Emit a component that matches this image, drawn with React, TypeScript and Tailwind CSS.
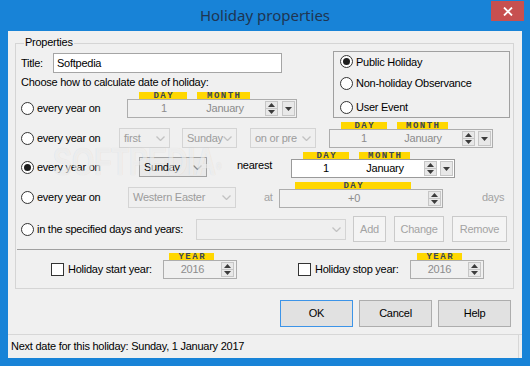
import React from "react";

const ui = "font-['Liberation_Sans',Arial,sans-serif] text-[11px] tracking-[-0.25px]";

function Radio({ checked }: { checked?: boolean }) {
  return (
    <span className="flex h-[13px] w-[13px] shrink-0 items-center justify-center rounded-full border border-[#333] bg-white">
      {checked && <span className="h-[7px] w-[7px] rounded-full bg-[#1e1e1e]" />}
    </span>
  );
}

function Check() {
  return <span className="h-[13px] w-[13px] shrink-0 border border-[#333] bg-white" />;
}

function Tag({ label, className }: { label: string; className: string }) {
  return (
    <div
      className={`h-[7px] overflow-visible bg-[#ffd700] pl-[1.5px] text-center font-['Liberation_Mono',monospace] text-[9px] font-bold leading-[8px] tracking-[1.5px] text-[#3a4657] ${className}`}
    >
      {label}
    </div>
  );
}

function Up() {
  return (
    <svg width="7" height="4" viewBox="0 0 7 4">
      <path d="M3.5 0L7 4H0Z" fill="#3c3c3c" />
    </svg>
  );
}

function Down() {
  return (
    <svg width="7" height="4" viewBox="0 0 7 4">
      <path d="M0 0H7L3.5 4Z" fill="#3c3c3c" />
    </svg>
  );
}

function Spin() {
  return (
    <div className="flex h-[15px] w-[13px] shrink-0 flex-col border border-[#c6c6c6] bg-[#e8e8e8]">
      <div className="flex flex-1 items-center justify-center border-b border-[#c6c6c6]">
        <Up />
      </div>
      <div className="flex flex-1 items-center justify-center">
        <Down />
      </div>
    </div>
  );
}

function Drop() {
  return (
    <div className="flex h-[15px] w-[13px] shrink-0 items-center justify-center border border-[#c6c6c6] bg-[#e8e8e8]">
      <Down />
    </div>
  );
}

function Chevron({ color }: { color: string }) {
  return (
    <svg width="9" height="5" viewBox="0 0 9 5" className="mr-[4px] shrink-0">
      <path d="M0.5 0.5L4.5 4.5L8.5 0.5" fill="none" stroke={color} strokeWidth="1.3" />
    </svg>
  );
}

function Combo({ text, className, enabled }: { text?: string; className: string; enabled?: boolean }) {
  return (
    <div
      className={`flex items-center border ${
        enabled ? "border-[#a3a3a3] bg-[#e9e9e9] text-black" : "border-[#d4d4d4] bg-[#efefef] text-[#9c9c9c]"
      } ${className}`}
    >
      <span className="flex-1 overflow-hidden whitespace-nowrap pl-[4px]">{text}</span>
      <Chevron color={enabled ? "#8a8a8a" : "#c2c2c2"} />
    </div>
  );
}

function Btn({ label, className }: { label: string; className: string }) {
  return (
    <div className={`flex items-center justify-center border border-[#cacaca] bg-[#f4f4f4] text-[#a3a3a3] ${className}`}>
      {label}
    </div>
  );
}

function DateFrame({
  w,
  white,
  dayW,
  monthW,
  dayTag,
  monthTag,
  gap,
}: {
  w: string;
  white?: boolean;
  dayW: string;
  monthW: string;
  dayTag: string;
  monthTag: string;
  gap: string;
}) {
  return (
    <div className={`flex flex-col ${w}`}>
      <div className="flex h-[7px]">
        <Tag label="DAY" className={dayTag} />
        <Tag label="MONTH" className={monthTag} />
      </div>
      <div
        className={`flex h-[19px] items-center border pr-[1px] ${
          white ? "border-[#9a9a9a] bg-white text-black" : "border-[#adadad] bg-[#f0f0f0] text-[#8c8c8c]"
        }`}
      >
        <span className={`text-center ${dayW}`}>1</span>
        <span className={`text-center ${monthW}`}>January</span>
        <span className="flex-1" />
        <Spin />
        <span className={gap} />
        <Drop />
      </div>
    </div>
  );
}

function YearBox({ tag }: { tag: string }) {
  return (
    <div className="flex w-[74px] flex-col">
      <Tag label="YEAR" className={tag} />
      <div className="flex h-[19px] items-center border border-[#adadad] bg-[#f0f0f0] pr-[2px] text-[#8c8c8c]">
        <span className="w-[57px] text-center">2016</span>
        <span className="flex-1" />
        <Spin />
      </div>
    </div>
  );
}

export default function App() {
  return (
    <div className={`flex h-[366px] w-[530px] flex-col bg-[#1883d7] ${ui}`}>
      <div className="relative flex h-[31px] shrink-0 items-center justify-center">
        <span className="pb-[1px] font-['Noto_Sans',sans-serif] text-[15px] tracking-normal text-[#1f3552]">
          Holiday properties
        </span>
        <div className="absolute right-[6px] top-[1px] flex h-[20px] w-[33px] items-center justify-center bg-[#c75050]">
          <svg width="10" height="9" viewBox="0 0 10 9">
            <path d="M1 0.5L9 8.5M9 0.5L1 8.5" stroke="white" strokeWidth="1.8" />
          </svg>
        </div>
      </div>

      <div className="relative mx-[8px] flex h-[327px] flex-col bg-[#f0f0f0] text-black">
        {/* Properties group */}
        <div className="relative ml-[7px] mt-[12px] h-[246px] w-[499px] border border-[#d5d5d5]">
          <span className="absolute -top-[8px] left-[8px] bg-[#f0f0f0] px-[1px] leading-[13px]">Properties</span>

          <div className="flex">
            <div className="ml-[5px] flex w-[312px] flex-col">
              <div className="mt-[9px] flex h-[20px] items-center">
                <span className="w-[32px]">Title:</span>
                <div className="flex h-[20px] w-[229px] items-center border border-[#a5a5a5] bg-white pl-[3px]">
                  Softpedia
                </div>
              </div>
              <div className="mt-[3px] h-[13px] leading-[13px]">Choose how to calculate date of holiday:</div>
              <div className="mt-[3px] flex h-[26px]">
                <div className="flex h-[19px] w-[106px] items-center gap-[3px] self-end">
                  <Radio />
                  every year on
                </div>
                <DateFrame
                  w="w-[170px]"
                  dayW="w-[72px]"
                  monthW="w-[50px]"
                  gap="w-[4px]"
                  dayTag="ml-[12px] w-[48px]"
                  monthTag="ml-[10px] w-[53px]"
                />
              </div>
            </div>
            <div className="mt-[7px] flex h-[67px] w-[177px] flex-col border border-[#a0a0a0] pl-[6px]">
              <div className="flex h-[20px] items-center gap-[3px]">
                <Radio checked />
                Public Holiday
              </div>
              <div className="mt-[2px] flex h-[20px] items-center gap-[3px]">
                <Radio />
                Non-holiday Observance
              </div>
              <div className="mt-[4px] flex h-[20px] items-center gap-[3px]">
                <Radio />
                User Event
              </div>
            </div>
          </div>

          {/* row 2 */}
          <div className="ml-[5px] mt-[4px] flex h-[26px]">
            <div className="flex h-[20px] w-[98px] items-center gap-[3px] self-end">
              <Radio />
              every year on
            </div>
            <Combo text="first" className="h-[20px] w-[51px] self-end" />
            <Combo text="Sunday" className="ml-[12px] h-[20px] w-[55px] self-end" />
            <Combo text="on or pre" className="ml-[13px] h-[20px] w-[66px] self-end" />
            <div className="ml-[13px]">
              <DateFrame
                w="w-[164px]"
                dayW="w-[68px]"
                monthW="w-[50px]"
                gap="w-[3px]"
                dayTag="ml-[12px] w-[46px]"
                monthTag="ml-[10px] w-[51px]"
              />
            </div>
          </div>

          {/* row 3 */}
          <div className="ml-[5px] mt-[4px] flex h-[26px]">
            <div className="mb-[1px] flex h-[20px] w-[118px] items-center gap-[3px] self-end">
              <Radio checked />
              every year on
            </div>
            <Combo text="Sunday" enabled className="mb-[1px] h-[20px] w-[68px] self-end" />
            <div className="mb-[3px] ml-[30px] flex h-[20px] w-[54px] items-center self-end">nearest</div>
            <DateFrame
              w="w-[164px]"
              white
              dayW="w-[68px]"
              monthW="w-[50px]"
              gap="w-[3px]"
              dayTag="ml-[12px] w-[46px]"
              monthTag="ml-[10px] w-[51px]"
            />
          </div>

          {/* row 4 */}
          <div className="ml-[5px] mt-[4px] flex h-[26px]">
            <div className="flex h-[21px] w-[107px] items-center gap-[3px] self-end">
              <Radio />
              every year on
            </div>
            <Combo text="Western Easter" className="h-[21px] w-[108px] self-end" />
            <div className="ml-[28px] flex h-[21px] w-[15px] items-center self-end text-[#a3a3a3]">at</div>
            <div className="flex w-[164px] flex-col">
              <Tag label="DAY" className="ml-[16px] w-[116px]" />
              <div className="flex h-[19px] items-center border border-[#adadad] bg-[#f0f0f0] pr-[1px] text-[#8c8c8c]">
                <span className="w-[148px] text-center">+0</span>
                <Spin />
              </div>
            </div>
            <div className="ml-[39px] flex h-[21px] items-center self-end text-[#a3a3a3]">days</div>
          </div>

          {/* row 5 */}
          <div className="ml-[5px] mt-[8px] flex h-[26px] items-center">
            <div className="flex w-[175px] items-center gap-[3px]">
              <Radio />
              in the specified days and years:
            </div>
            <Combo className="h-[21px] w-[150px]" />
            <Btn label="Add" className="ml-[7px] h-[26px] w-[33px]" />
            <Btn label="Change" className="ml-[8px] h-[26px] w-[50px]" />
            <Btn label="Remove" className="ml-[8px] h-[26px] w-[55px]" />
          </div>

          <div className="ml-[1px] mt-[7px] h-[1px] w-[493px] bg-[#a0a0a0]" />

          {/* row 6 */}
          <div className="mt-[3px] flex h-[26px]">
            <div className="ml-[35px] flex h-[19px] w-[112px] items-center gap-[4px] self-end">
              <Check />
              Holiday start year:
            </div>
            <YearBox tag="ml-[6px] w-[45px]" />
            <div className="ml-[61px] flex h-[19px] w-[112px] items-center gap-[4px] self-end">
              <Check />
              Holiday stop year:
            </div>
            <YearBox tag="ml-[7px] w-[45px]" />
          </div>
        </div>

        {/* dialog buttons */}
        <div className="mt-[11px] flex h-[27px] justify-end gap-[6px] pr-[11px]">
          <div className="flex w-[73px] items-center justify-center border border-[#3c94e8] bg-[#e1e1e1]">OK</div>
          <div className="flex w-[73px] items-center justify-center border border-[#adadad] bg-[#e1e1e1]">Cancel</div>
          <div className="flex w-[73px] items-center justify-center border border-[#adadad] bg-[#e1e1e1]">Help</div>
        </div>

        {/* status bar */}
        <div className="mt-[7px] flex flex-1 border-t border-[#d7d7d7]">
          <div className="flex w-[511px] items-center border-r border-[#d7d7d7] pl-[3px]">
            Next date for this holiday: Sunday, 1 January 2017
          </div>
        </div>

        <div className="pointer-events-none absolute left-[45px] top-[112px] origin-left scale-x-75 font-['Liberation_Sans',Arial,sans-serif] text-[38px] font-bold leading-none tracking-normal text-white/60 [text-shadow:0_0_1px_rgba(0,0,0,0.12)]">
          SOFTPEDIA<sup className="text-[10px] font-normal">®</sup>
        </div>
      </div>
    </div>
  );
}
